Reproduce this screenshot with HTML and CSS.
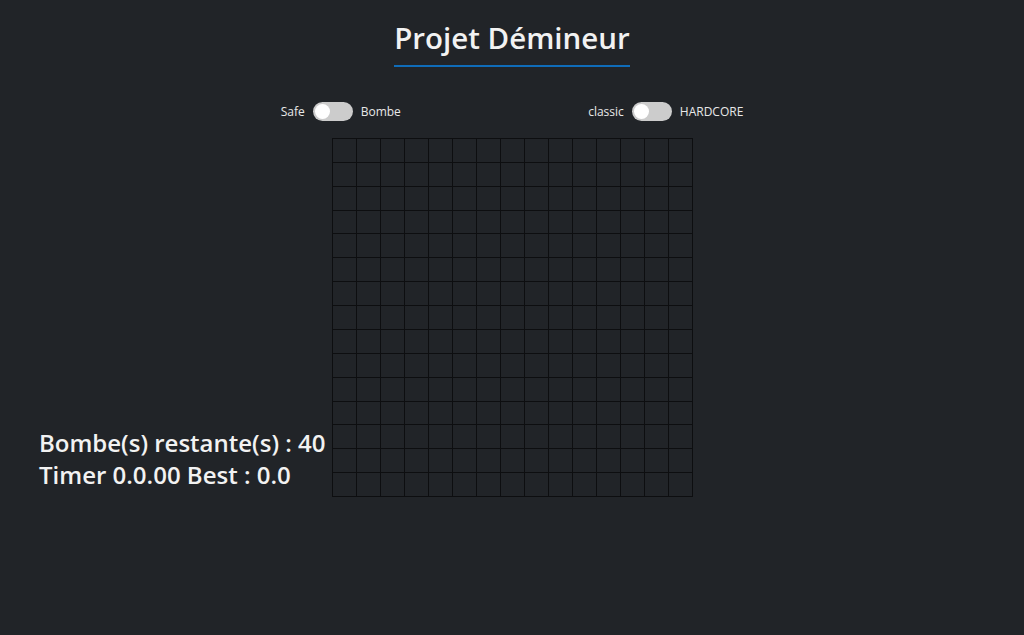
FILE: index.html
```html
<!DOCTYPE html>
<html lang="fr">
<head>
    <meta charset="UTF-8">
    <meta name="viewport" content="width=device-width, initial-scale=1.0">
    <title>Projet Démineur</title>
    <link rel="stylesheet" href="styles.css">
</head>
<body>

<div class="header">
    <h1>Projet Démineur</h1>
</div>

<div class="controls">
    <div class="toggle">
        <span>Safe</span>
        <label class="switch">
            <input type="checkbox" id="modeClick">
            <span class="slider"></span>
        </label>
        <span>Bombe</span>
    </div>
    <div class="toggle">
        <span>classic</span>
        <label class="switch">
            <input type="checkbox" id="modeHardcore">
            <span class="slider"></span>
        </label>
        <span>HARDCORE</span>
    </div>
</div>

<div class="main">
    <div class="infos">
        <div>Bombe(s) restante(s) : <span id="bombCount">40</span></div>
        <div>Timer <span id="timer">0.0.00</span> Best : <span id="best">0.0</span></div>
    </div>
    <div class="board" id="board"></div>
    <div></div>
</div>

<script>
    const size = 15;
    const board = document.getElementById('board');

    // construction de la grille
    for (let i = 0; i < size * size; i++) {
        const cell = document.createElement('div');
        cell.className = 'cell';
        cell.dataset.x = i % size;
        cell.dataset.y = Math.floor(i / size);
        board.appendChild(cell);
    }
</script>

</body>
</html>
```

FILE: styles.css
```css
body {
    margin: 0;
    padding: 0;
    background-color: #212428;
    color: #f2f2f2;
    font-family: "Open Sans", "Noto Sans", sans-serif;
}

.header {
    text-align: center;
    padding-top: 19px;
}

.header h1 {
    display: inline-block;
    margin: 0;
    padding-bottom: 8px;
    font-size: 29.5px;
    font-weight: 600;
    line-height: 38px;
    border-bottom: 2px solid #0f6cb9;
}

/* switchs */
.controls {
    width: 650px;
    margin: 35px auto 0;
    display: flex;
    justify-content: space-around;
    align-items: center;
}

.toggle {
    display: flex;
    align-items: center;
    gap: 8px;
    font-size: 12px;
    color: #e8e8e8;
}

.switch {
    position: relative;
    display: inline-block;
    width: 40px;
    height: 19px;
}

.switch input {
    opacity: 0;
    width: 0;
    height: 0;
}

.slider {
    position: absolute;
    cursor: pointer;
    top: 0;
    left: 0;
    right: 0;
    bottom: 0;
    background-color: #cccccc;
    border-radius: 19px;
}

.slider:before {
    position: absolute;
    content: "";
    width: 15px;
    height: 15px;
    left: 2px;
    top: 2px;
    background-color: white;
    border-radius: 50%;
}

.switch input:checked + .slider {
    background-color: #0f6cb9;
}

.switch input:checked + .slider:before {
    transform: translateX(21px);
}

/* plateau */
.main {
    display: grid;
    grid-template-columns: 1fr auto 1fr;
    margin-top: 17px;
}

.infos {
    justify-self: end;
    align-self: end;
    margin-right: 6px;
    margin-bottom: 6px;
    font-size: 24px;
    font-weight: 600;
    line-height: 32px;
}

.board {
    display: grid;
    grid-template-columns: repeat(15, 24px);
    grid-template-rows: repeat(15, 1fr);
    height: 358px;
    border-left: 1px solid #0d0e10;
    border-top: 1px solid #0d0e10;
}

.cell {
    border-right: 1px solid #0d0e10;
    border-bottom: 1px solid #0d0e10;
    cursor: pointer;
}
```
